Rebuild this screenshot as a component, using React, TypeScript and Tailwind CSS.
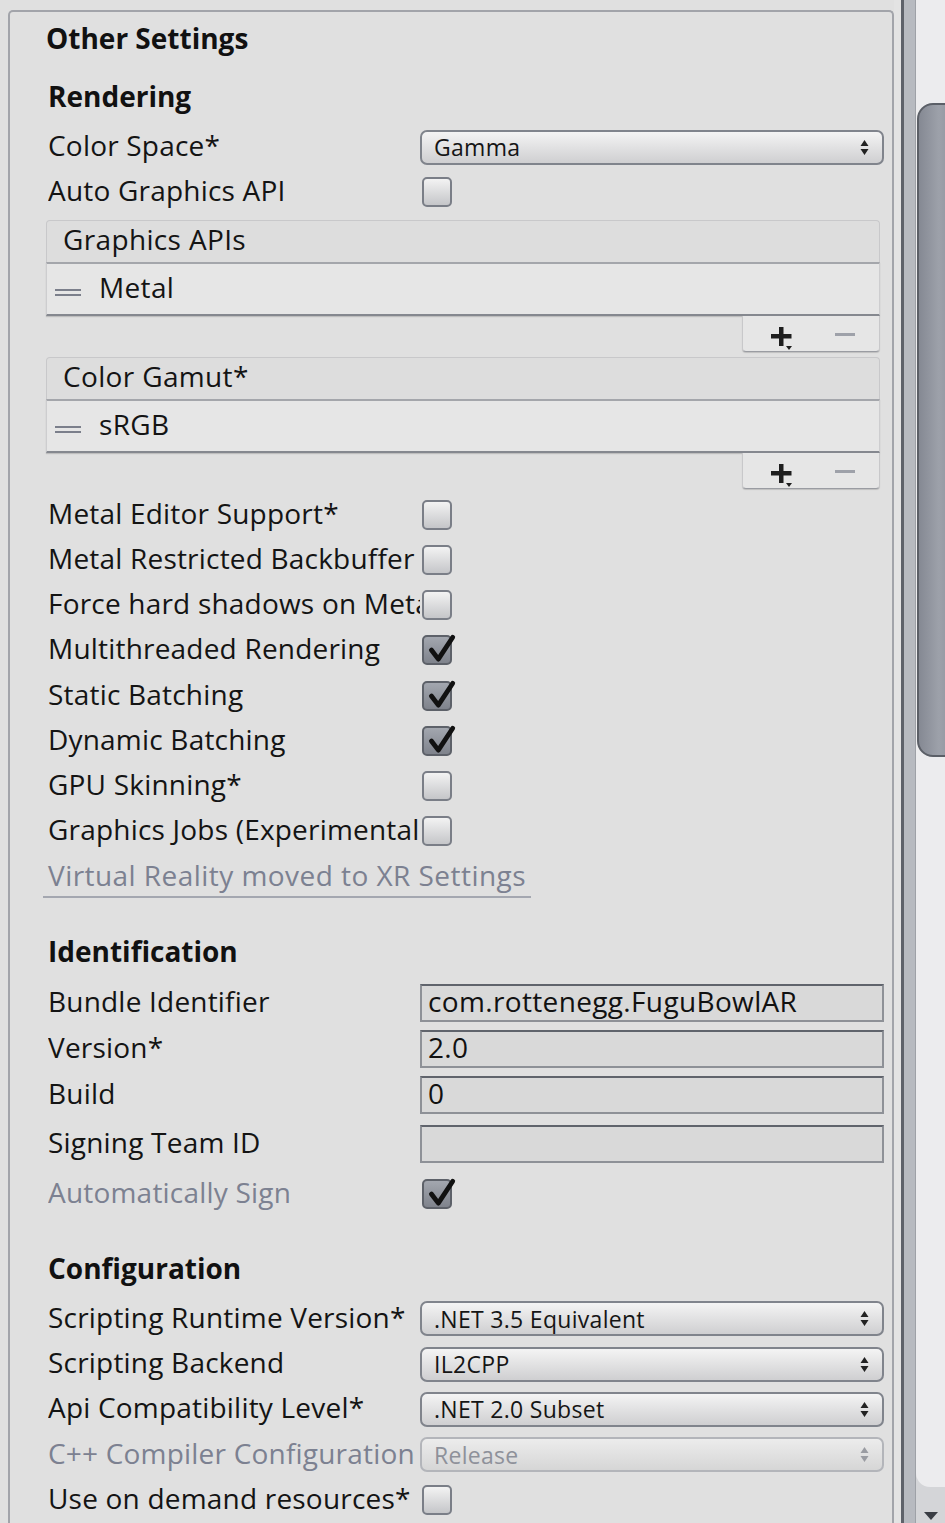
import React from "react";

const font = "font-['Open_Sans','DejaVu_Sans',sans-serif]";

function Check({ on }: { on?: boolean }) {
  return (
    <div
      className={`relative ml-[2px] h-[30px] w-[30px] rounded-[5px] border-2 ${
        on
          ? "border-[#5d6169] bg-linear-to-b from-[#a3a7af] to-[#7f838c]"
          : "border-[#7a7e87] bg-linear-to-b from-[#f3f3f3] to-[#c5c6c9]"
      }`}
    >
      {on && (
        <svg viewBox="0 0 30 30" className="absolute left-[1px] top-[-4px] h-[32px] w-[32px] overflow-visible">
          <path
            d="M6 16 L12.5 24.5 L26 4"
            fill="none"
            stroke="#111"
            strokeWidth="4.5"
            strokeLinecap="round"
            strokeLinejoin="round"
          />
        </svg>
      )}
    </div>
  );
}

function Arrows({ dim }: { dim?: boolean }) {
  return (
    <svg width="9" height="17" viewBox="0 0 9 17">
      <path d="M4.5 1 L8.5 7 H0.5Z M4.5 16 L8.5 10 H0.5Z" fill={dim ? "#9a9ca2" : "#222"} />
    </svg>
  );
}

function Select({ value, dim }: { value: string; dim?: boolean }) {
  return (
    <div
      className={`flex h-[35px] items-center rounded-[7px] border-2 pl-[12px] pr-[13px] text-[23px] leading-[30px] ${
        dim
          ? "border-[#b3b5ba] bg-linear-to-b from-[#ececec] to-[#d6d6d6] text-[#8e919a]"
          : "border-[#80848c] bg-linear-to-b from-[#f4f4f4] to-[#cfcfd1] text-[#151515]"
      }`}
    >
      <span className="flex-1 tracking-[0.3px]">{value}</span>
      <Arrows dim={dim} />
    </div>
  );
}

function Field({ value }: { value: string }) {
  return (
    <div className="flex h-[38px] items-center border-2 border-[#8e9197] border-t-[#60646c] bg-[#d9d9d9] pb-[4px] pl-[6px] text-[28px] leading-[32px] tracking-[0.35px] text-[#111]">
      {value}
    </div>
  );
}

function Row({
  label,
  h,
  dim,
  children,
}: {
  label: string;
  h: string;
  dim?: boolean;
  children?: React.ReactNode;
}) {
  return (
    <div className={`flex items-center ${h}`}>
      <div
        className={`w-[372px] shrink-0 overflow-hidden whitespace-nowrap pb-[4px] text-[28px] leading-[36px] tracking-[0.2px] ${
          dim ? "text-[#7c8191]" : "text-[#141414]"
        }`}
      >
        {label}
      </div>
      <div className="min-w-0 flex-1">{children}</div>
    </div>
  );
}

function Heading({ text, h, extra = "" }: { text: string; h: string; extra?: string }) {
  return (
    <div className={`flex items-center pb-[2px] text-[28px] font-bold leading-[36px] text-[#111] ${h} ${extra}`}>
      {text}
    </div>
  );
}

function Plus() {
  return (
    <svg width="28" height="26" viewBox="0 0 28 26">
      <path d="M10 1 H14.5 V8 H22.5 V12.5 H14.5 V20 H10 V12.5 H2 V8 H10Z" fill="#1e1e1e" />
      <path d="M17 20 H23 L20 24Z" fill="#1e1e1e" />
    </svg>
  );
}

function ListBox({ title, item, extra = "" }: { title: string; item: string; extra?: string }) {
  return (
    <div className={`ml-[-2px] mr-[4px] flex flex-col ${extra}`}>
      <div className="flex h-[42px] items-center rounded-t-[4px] border border-b-0 border-[#c8c8ca] bg-[#dddddd] pb-[6px] pl-[16px] text-[28px] leading-[34px] tracking-[0.35px] text-[#141414]">
        {title}
      </div>
      <div className="flex h-[54px] items-center border-x border-t-2 border-b-2 border-x-[#cdcdcf] border-t-[#a4a6ab] border-b-[#85888f] bg-[#e6e6e6] pl-[8px] shadow-[0_1px_1px_rgba(0,0,0,0.15)]">
        <div className="mt-[6px] flex w-[26px] flex-col gap-[3px]">
          <div className="h-[2px] bg-[#7b7f8b]" />
          <div className="h-[2px] bg-[#7b7f8b]" />
        </div>
        <span className="mb-[4px] ml-[18px] text-[28px] leading-[34px] tracking-[0.35px] text-[#141414]">{item}</span>
      </div>
      <div className="flex h-[36px] w-[138px] items-center self-end rounded-b-[4px] border border-t-0 border-[#c8c8ca] border-b-[#9a9ca2] bg-[#e6e6e6] shadow-[0_1px_1px_rgba(0,0,0,0.15)]">
        <div className="ml-[26px] mt-[10px]">
          <Plus />
        </div>
        <div className="ml-[38px] mt-[2px] h-[3px] w-[20px] bg-[#9ea1a9]" />
      </div>
    </div>
  );
}

export default function App() {
  return (
    <div className={`flex h-[1523px] w-[945px] overflow-hidden bg-[#e0e0e0] ${font}`}>
      <div className="w-[894px] shrink-0 pl-[8px] pt-[10px]">
        <div className="h-[1600px] rounded-t-[5px] border-2 border-b-0 border-[#a2a4aa] pl-[38px] pr-[8px]">
          <Heading text="Other Settings" h="h-[54px]" extra="ml-[-2px]" />
          <Heading text="Rendering" h="h-[62px]" />
          <Row label="Color Space*" h="h-[38px]">
            <Select value="Gamma" />
          </Row>
          <Row label="Auto Graphics API" h="h-[52px]">
            <Check />
          </Row>
          <ListBox title="Graphics APIs" item="Metal" extra="mt-[2px]" />
          <ListBox title="Color Gamut*" item="sRGB" extra="mt-[5px]" />
          <div className="mt-[3px]">
            {[
              ["Metal Editor Support*", false],
              ["Metal Restricted Backbuffer", false],
              ["Force hard shadows on Metal", false],
              ["Multithreaded Rendering", true],
              ["Static Batching", true],
              ["Dynamic Batching", true],
              ["GPU Skinning*", false],
              ["Graphics Jobs (Experimental)*", false],
            ].map(([label, on]) => (
              <Row key={label as string} label={label as string} h="h-[45.25px]">
                <Check on={on as boolean} />
              </Row>
            ))}
            <div className="flex h-[45.25px] items-center">
              <span className="ml-[-5px] border-b-2 border-[#a4a7b0] px-[5px] pb-[2px] text-[28px] leading-[38px] tracking-[0.45px] text-[#7c8191]">
                Virtual Reality moved to XR Settings
              </span>
            </div>
          </div>
          <Heading text="Identification" h="h-[45px]" extra="mt-[30px]" />
          <div className="mt-[6px]">
            <Row label="Bundle Identifier" h="h-[46px]">
              <Field value="com.rottenegg.FuguBowlAR" />
            </Row>
            <Row label="Version*" h="h-[46px]">
              <Field value="2.0" />
            </Row>
            <Row label="Build" h="h-[45px]">
              <Field value="0" />
            </Row>
            <Row label="Signing Team ID" h="h-[54px]">
              <Field value="" />
            </Row>
            <Row label="Automatically Sign" h="h-[46px]" dim>
              <Check on />
            </Row>
          </div>
          <Heading text="Configuration" h="h-[45px]" extra="mt-[29px]" />
          <div className="mt-[5px]">
            <Row label="Scripting Runtime Version*" h="h-[45.25px]">
              <Select value=".NET 3.5 Equivalent" />
            </Row>
            <Row label="Scripting Backend" h="h-[45.25px]">
              <Select value="IL2CPP" />
            </Row>
            <Row label="Api Compatibility Level*" h="h-[45.25px]">
              <Select value=".NET 2.0 Subset" />
            </Row>
            <Row label="C++ Compiler Configuration" h="h-[45.25px]" dim>
              <Select value="Release" dim />
            </Row>
            <Row label="Use on demand resources*" h="h-[45.25px]">
              <Check />
            </Row>
          </div>
        </div>
      </div>
      <div className="w-[7px] shrink-0 bg-[#e3e3e3]" />
      <div className="w-[3px] shrink-0 bg-[#5e626a]" />
      <div className="w-[11px] shrink-0 bg-[#b7bac0]" />
      <div className="flex w-[30px] shrink-0 flex-col overflow-hidden border-l border-[#9ea1a7] bg-[#d4d5d8]">
        <div className="flex h-[1487px] flex-col overflow-hidden rounded-bl-[14px] bg-[#ececee] pt-[103px]">
          <div className="ml-[1px] h-[654px] w-[44px] rounded-[16px] border-2 border-[#5b5f67] bg-linear-to-r from-[#858993] via-[#9da1aa] to-[#8b8f99]" />
        </div>
        <div className="flex flex-1 items-end justify-center pb-[2px]">
          <svg width="16" height="10" viewBox="0 0 16 10">
            <path d="M1 1 H15 L8 9Z" fill="#3a3d44" />
          </svg>
        </div>
      </div>
    </div>
  );
}
